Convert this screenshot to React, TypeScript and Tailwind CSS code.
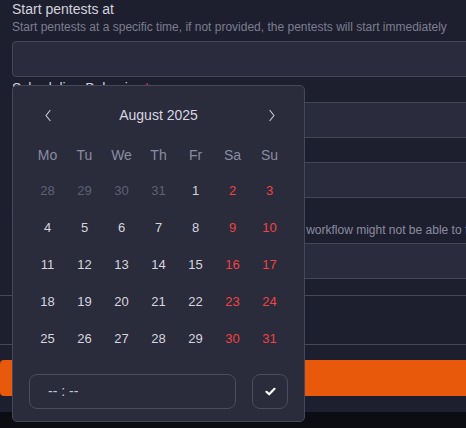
import React from "react";

const weekdays = ["Mo", "Tu", "We", "Th", "Fr", "Sa", "Su"];

type Day = { n: number; out?: boolean };
const weeks: Day[][] = [
  [{ n: 28, out: true }, { n: 29, out: true }, { n: 30, out: true }, { n: 31, out: true }, { n: 1 }, { n: 2 }, { n: 3 }],
  [{ n: 4 }, { n: 5 }, { n: 6 }, { n: 7 }, { n: 8 }, { n: 9 }, { n: 10 }],
  [{ n: 11 }, { n: 12 }, { n: 13 }, { n: 14 }, { n: 15 }, { n: 16 }, { n: 17 }],
  [{ n: 18 }, { n: 19 }, { n: 20 }, { n: 21 }, { n: 22 }, { n: 23 }, { n: 24 }],
  [{ n: 25 }, { n: 26 }, { n: 27 }, { n: 28 }, { n: 29 }, { n: 30 }, { n: 31 }],
];

function Input() {
  return <div className="h-[36px] w-[480px] rounded-[4px] border border-[#454759] bg-[#2a2b3d]" />;
}

export default function App() {
  return (
    <div
      className="relative flex h-[428px] w-[466px] flex-col overflow-hidden bg-[#1e1f2e]"
      style={{ fontFamily: '"Liberation Sans", Arial, sans-serif' }}
    >
      <div className="flex flex-col px-3">
        <div className="text-[14px] leading-[18px] text-[#d2d3dc]">Start pentests at</div>
        <div className="mt-[1px] text-[12px] leading-[16px] text-[#7b7d90]">
          Start pentests at a specific time, if not provided, the pentests will start immediately
        </div>
        <div className="mt-[6px]">
          <Input />
        </div>
        <div className="mt-[2px] text-[14px] leading-[18px] text-[#d2d3dc]">
          Scheduling Behavior <span className="text-[#ef4444]">*</span>
        </div>
        <div className="mt-[5px]">
          <Input />
        </div>
        <div className="mt-[5px] text-[14px] leading-[18px] text-[#d2d3dc]">Concurrency</div>
        <div className="mt-[1px]">
          <Input />
        </div>
        <div className="mt-[6px] text-[14px] leading-[18px] text-[#d2d3dc]">Timeout</div>
        <div className="whitespace-nowrap text-[12px] leading-[16px] text-[#8a8ca0]">
          If the pentest takes longer than the limit in minutes, the workflow might not be able to finish
        </div>
        <div className="mt-[5px]">
          <Input />
        </div>
      </div>
      <div className="mt-[16px] h-[50px] border-y border-[#45475a]" />
      <div className="mt-[15px] h-[36px] w-full rounded-l-[4px] bg-[#e8590c]" />
      <div className="mt-[16px] flex-1 bg-[#0c0d13]" />

      <div className="absolute left-[12px] top-[85px] flex h-[337px] w-[293px] flex-col rounded-[5px] border border-[#45475a] bg-[#2a2b3b] px-4 pt-4 pb-3">
        <div className="flex h-[26px] items-center justify-between">
          <div className="flex w-[37px] justify-center text-[#c9cad4]">
            <svg width="8" height="13" viewBox="0 0 8 13" fill="none">
              <path d="M6 1.5L2 6.5l4 5" stroke="currentColor" strokeWidth="1.2" strokeLinecap="round" strokeLinejoin="round" />
            </svg>
          </div>
          <div className="text-[14px] text-[#d6d7e0]">August 2025</div>
          <div className="flex w-[37px] justify-center pl-[4px] text-[#c9cad4]">
            <svg width="8" height="13" viewBox="0 0 8 13" fill="none">
              <path d="M2 1.5L6 6.5l-4 5" stroke="currentColor" strokeWidth="1.2" strokeLinecap="round" strokeLinejoin="round" />
            </svg>
          </div>
        </div>
        <div className="mt-[10px] grid h-[34px] grid-cols-7 items-center">
          {weekdays.map((w) => (
            <div key={w} className="text-center text-[14px] text-[#8b8da0]">
              {w}
            </div>
          ))}
        </div>
        <div className="flex flex-col">
          {weeks.map((wk, i) => (
            <div key={i} className="grid h-[37px] grid-cols-7 items-center">
              {wk.map((d, j) => (
                <div
                  key={j}
                  className={
                    "text-center text-[13px] " +
                    (d.out ? "text-[#5f6173]" : j >= 5 ? "text-[#ef4444]" : "text-[#d5d6df]")
                  }
                >
                  {d.n}
                </div>
              ))}
            </div>
          ))}
        </div>
        <div className="mt-[17px] flex gap-4">
          <div className="flex h-[35px] flex-1 items-center rounded-lg border border-[#4a4c5f] pl-[18px] text-[14px] text-[#c4c6d2]">
            -- : --
          </div>
          <div className="flex h-[35px] w-[36px] items-center justify-center rounded-lg border border-[#4a4c5f] text-white">
            <svg width="11" height="9" viewBox="0 0 11 9" fill="none">
              <path d="M1.5 4.8L4.2 7.3L9.5 1.8" stroke="currentColor" strokeWidth="2.2" strokeLinecap="round" strokeLinejoin="round" />
            </svg>
          </div>
        </div>
      </div>
    </div>
  );
}
